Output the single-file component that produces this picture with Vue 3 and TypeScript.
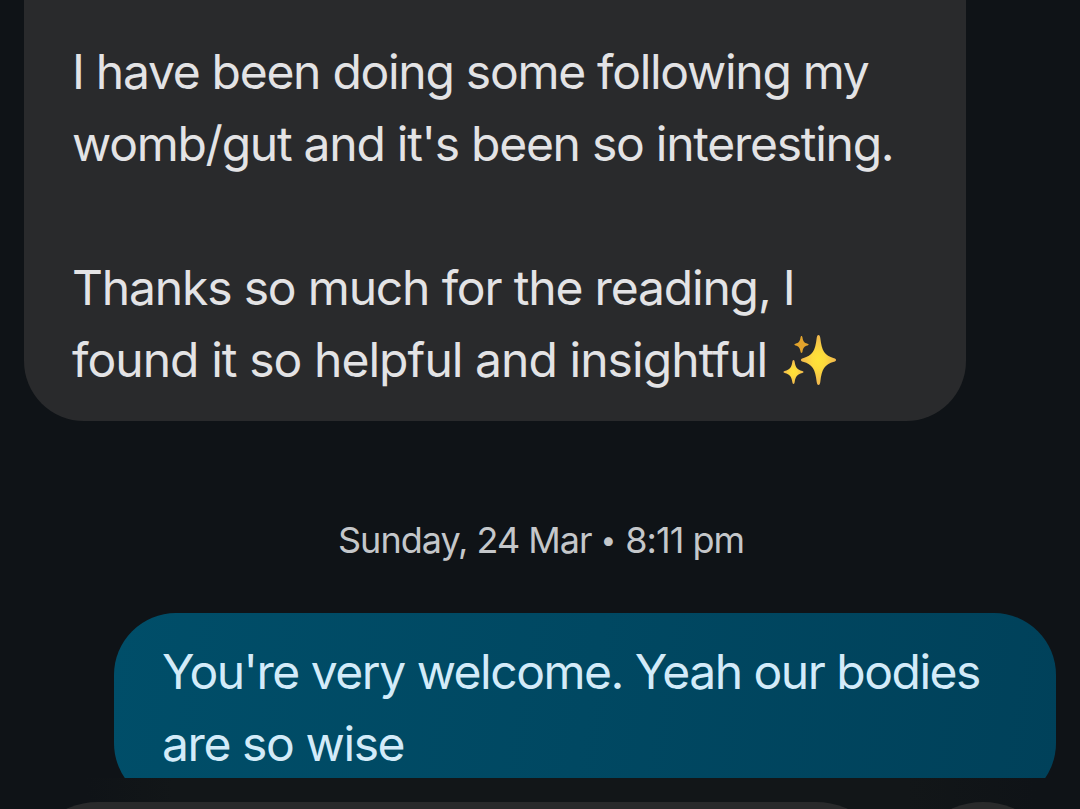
<template>
  <div class="screen">
    <main class="thread">
      <div class="bubble incoming">
        <p v-for="(line, i) in incoming" :key="i" class="line">
          <span :style="{ letterSpacing: line.spacing + 'px' }">{{ line.text }}</span>
          <svg v-if="line.sparkles" class="sparkles" viewBox="0 0 54 54">
            <defs>
              <radialGradient id="spark">
                <stop offset="0" stop-color="#ffe338" />
                <stop offset="0.35" stop-color="#fddb3c" />
                <stop offset="1" stop-color="#f0b650" />
              </radialGradient>
            </defs>
            <path fill="url(#spark)" d="M35.5 1C36.5 1 37 2 37.3 4C38.8 17 41.5 21.500 51 24.200C53.800 25 53.800 27 51 27.800C41.500 30.500 38.800 35 37.300 48C37 50 36.500 51 35.500 51C34.500 51 34 50 33.700 48C32.200 35 29.500 30.500 20 27.800C17.200 27 17.200 25 20 24.200C29.500 21.500 32.200 17 33.700 4C34 2 34.500 1 35.500 1Z" />
            <path fill="url(#spark)" d="M10.500 26C11.200 26 11.500 26.700 11.700 28C12.500 33.500 14.200 35.600 19.300 37C21 37.500 21 38.500 19.300 39C14.200 40.400 12.500 42.500 11.700 48C11.500 49.300 11.200 50 10.500 50C9.800 50 9.500 49.300 9.300 48C8.500 42.500 6.800 40.400 1.700 39C0 38.500 0 37.500 1.700 37C6.800 35.600 8.500 33.500 9.300 28C9.500 26.700 9.800 26 10.500 26Z" />
            <path fill="#e2a32c" d="M18.500 2C19.100 2 19.300 2.600 19.500 3.600C20.100 7.600 21.300 8.900 24.500 9.800C26 10.200 26 11 24.500 11.400C21.300 12.300 20.100 13.600 19.500 17.600C19.300 18.600 19.100 19 18.500 19C17.900 19 17.700 18.600 17.500 17.600C16.900 13.600 15.700 12.300 12.500 11.400C11 11 11 10.200 12.500 9.800C15.700 8.900 16.900 7.600 17.500 3.600C17.700 2.600 17.900 2 18.500 2Z" />
          </svg>
        </p>
      </div>

      <div class="timestamp">
        <span>{{ date }}</span>
        <span class="dot">•</span>
        <span>{{ time }}</span>
      </div>

      <div class="bubble outgoing">
        <p v-for="(line, i) in outgoing" :key="i" class="line">
          <span :style="{ letterSpacing: line.spacing + 'px' }">{{ line.text }}</span>
        </p>
      </div>
    </main>

    <footer class="composer">
      <div class="composer-input"></div>
      <div class="composer-button"></div>
    </footer>
  </div>
</template>

<script setup lang="ts">
import { ref } from 'vue';

interface MessageLine {
  text: string;
  spacing: number;
  sparkles?: boolean;
}

const incoming = ref<MessageLine[]>([
  { text: 'I have been doing some following my', spacing: -1.28 },
  { text: "womb/gut and it's been so interesting.", spacing: -1.26 },
  { text: '', spacing: 0 },
  { text: 'Thanks so much for the reading, I', spacing: -1.17 },
  { text: 'found it so helpful and insightful', spacing: -0.94, sparkles: true },
]);

const date = ref('Sunday, 24 Mar');
const time = ref('8:11 pm');

const outgoing = ref<MessageLine[]>([
  { text: "You're very welcome. Yeah our bodies", spacing: -1.49 },
  { text: 'are so wise', spacing: -1.4 },
]);
</script>

<style>
body {
  margin: 0;
  background: #0f1317;
}
</style>

<style scoped>
.screen {
  height: 809px;
  display: flex;
  flex-direction: column;
  overflow: hidden;
  background: #0f1317;
  font-family: Inter, 'Noto Sans', sans-serif;
}

.thread {
  height: 778px;
  flex: none;
  display: flex;
  flex-direction: column;
  overflow: hidden;
}

.bubble {
  width: 942px;
  flex: none;
  box-sizing: border-box;
  font-size: 48px;
  line-height: 72px;
}

.incoming {
  height: 421px;
  margin-left: 24px;
  padding: 36px 0 25px 48px;
  border-radius: 0 0 60px 60px;
  background: #292a2c;
  color: #e3e3e5;
}

.outgoing {
  height: 192px;
  margin-left: 114px;
  padding: 23px 0 25px 48px;
  border-radius: 62px;
  background: linear-gradient(100deg, #004e69 0%, #004862 50%, #00415a 100%);
  color: #d3ebf9;
}

.line {
  height: 72px;
  margin: 0;
  display: flex;
  align-items: center;
  white-space: pre;
}

.sparkles {
  width: 54px;
  height: 54px;
  flex: none;
  margin: 2px 0 0 16px;
}

.timestamp {
  height: 192px;
  flex: none;
  box-sizing: border-box;
  padding: 95px 0 0 2px;
  display: flex;
  justify-content: center;
  gap: 9px;
  font-size: 36px;
  line-height: 48px;
  letter-spacing: -1px;
  color: #c4c7ca;
}

.dot {
  font-size: 28px;
  letter-spacing: 0;
}

.composer {
  height: 31px;
  box-sizing: border-box;
  padding: 24px 21px 0 22px;
  display: flex;
  justify-content: space-between;
  background: linear-gradient(90deg, #0f1317 8%, #121618 16%, #121618 84%, #0f1317 96%);
}

.composer-input {
  width: 870px;
  height: 152px;
  border-radius: 76px;
  background: #292a2b;
}

.composer-button {
  width: 152px;
  height: 152px;
  border-radius: 50%;
  background: #292a2b;
}
</style>
